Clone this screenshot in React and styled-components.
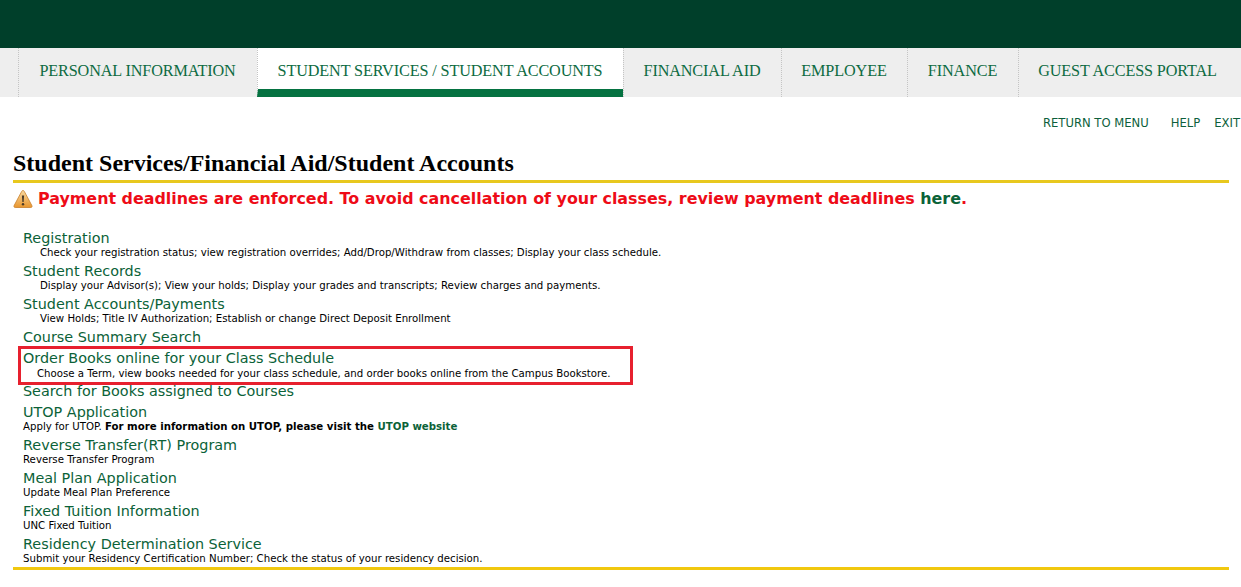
import styled, { createGlobalStyle } from "styled-components";

const tabs = [
  { label: "PERSONAL INFORMATION", width: 239 },
  { label: "STUDENT SERVICES / STUDENT ACCOUNTS", width: 366, active: true },
  { label: "FINANCIAL AID", width: 158 },
  { label: "EMPLOYEE", width: 126 },
  { label: "FINANCE", width: 111 },
  { label: "GUEST ACCESS PORTAL", width: 219 },
];

const menu = [
  {
    title: "Registration",
    text: "Check your registration status; view registration overrides; Add/Drop/Withdraw from classes; Display your class schedule.",
    indent: 17,
  },
  {
    title: "Student Records",
    text: "Display your Advisor(s); View your holds; Display your grades and transcripts; Review charges and payments.",
    indent: 17,
  },
  {
    title: "Student Accounts/Payments",
    text: "View Holds; Title IV Authorization; Establish or change Direct Deposit Enrollment",
    indent: 17,
  },
  { title: "Course Summary Search" },
  {
    title: "Order Books online for your Class Schedule",
    text: "Choose a Term, view books needed for your class schedule, and order books online from the Campus Bookstore.",
    indent: 14,
    marked: true,
  },
  { title: "Search for Books assigned to Courses" },
  { title: "UTOP Application", utop: true },
  { title: "Reverse Transfer(RT) Program", text: "Reverse Transfer Program" },
  { title: "Meal Plan Application", text: "Update Meal Plan Preference" },
  { title: "Fixed Tuition Information", text: "UNC Fixed Tuition" },
  {
    title: "Residency Determination Service",
    text: "Submit your Residency Certification Number; Check the status of your residency decision.",
  },
];

function WarningIcon() {
  return (
    <svg width="20" height="20" viewBox="0 0 20 20" aria-hidden="true">
      <defs>
        <linearGradient id="warn" x1="0" y1="0" x2="0" y2="1">
          <stop offset="0" stopColor="#f8d9a0" />
          <stop offset="1" stopColor="#e8962e" />
        </linearGradient>
      </defs>
      <path
        d="M10 1.5c.6 0 1 .3 1.3.9l7.6 14.2c.5 1 0 1.9-1.1 1.9H2.2c-1.1 0-1.6-.9-1.1-1.9L8.7 2.4c.3-.6.7-.9 1.3-.9z"
        fill="url(#warn)"
        stroke="#c9802c"
        strokeWidth="0.8"
      />
      <path d="M8.9 6.5h2.2l-.5 6.6H9.400z" fill="#4a3a28" />
      <circle cx="10" cy="15.200" r="1.200" fill="#4a3a28" />
    </svg>
  );
}

export default function App() {
  return (
    <>
      <GlobalStyle />
      <TopBar />
      <TabBar>
        {tabs.map((tab) => (
          <Tab key={tab.label} $active={tab.active} $width={tab.width}>
            {tab.label}
          </Tab>
        ))}
      </TabBar>
      <UtilityLinks>
        <UtilityLink>RETURN TO MENU</UtilityLink>
        <UtilityLink>HELP</UtilityLink>
        <UtilityLink>EXIT</UtilityLink>
      </UtilityLinks>
      <Content>
        <Heading>Student Services/Financial Aid/Student Accounts</Heading>
        <Notice>
          <WarningIcon />
          <span>
            Payment deadlines are enforced. To avoid cancellation of your classes, review payment
            deadlines <NoticeLink>here</NoticeLink>.
          </span>
        </Notice>
        <MenuList>
          {menu.map((item) => (
            <MenuItem key={item.title} $marked={item.marked}>
              <MenuTitle>{item.title}</MenuTitle>
              {item.text && (
                <MenuText $indent={item.indent} $marked={item.marked}>
                  {item.text}
                </MenuText>
              )}
              {item.utop && (
                <MenuText>
                  Apply for UTOP. <b>For more information on UTOP, please visit the </b>
                  <UtopLink>UTOP website</UtopLink>
                </MenuText>
              )}
            </MenuItem>
          ))}
        </MenuList>
      </Content>
    </>
  );
}

const GlobalStyle = createGlobalStyle`
  html, body {
    margin: 0;
    padding: 0;
    background: #fff;
    overflow: hidden;
  }
  body {
    font-family: "DejaVu Sans", Verdana, sans-serif;
  }
`;

const TopBar = styled.div`
  height: 48px;
  background: #003f2a;
`;

const TabBar = styled.nav`
  display: flex;
  height: 49px;
  padding-left: 18px;
  background: #eeeeee;
`;

const Tab = styled.a`
  box-sizing: border-box;
  flex: none;
  width: ${({ $width }) => $width}px;
  height: 49px;
  padding: 14px 1px 0 0;
  text-align: center;
  font: 16.200px/19px "Liberation Serif", "Times New Roman", serif;
  letter-spacing: -0.12px;
  color: #0d6b42;
  white-space: nowrap;
  border-left: 1px dotted #c4c4c4;
  background: ${({ $active }) => ($active ? "#fff" : "transparent")};
  border-bottom: ${({ $active }) => ($active ? "8px solid #057241" : "0")};
`;

const UtilityLinks = styled.div`
  display: flex;
  justify-content: flex-end;
  gap: 22px;
  height: 50px;
  padding-top: 18px;
  box-sizing: border-box;
  margin-right: 1px;
`;

const UtilityLink = styled.a`
  font-size: 11.600px;
  line-height: 16px;
  color: #0d5f3c;
  white-space: nowrap;
  &:last-child {
    margin-left: -8px;
  }
`;

const Content = styled.main`
  box-sizing: border-box;
  width: 1216px;
  margin-left: 13px;
  border-bottom: 3px solid #f1c80f;
  height: 423px;
`;

const Heading = styled.h2`
  margin: 0;
  height: 36px;
  box-sizing: border-box;
  padding-top: 3px;
  border-bottom: 3px solid #e8c81e;
  font: bold 24px/27px "Liberation Serif", "Times New Roman", serif;
  color: #000;
`;

const Notice = styled.div`
  display: flex;
  align-items: center;
  gap: 5px;
  height: 25px;
  margin-top: 3px;
  font-size: 15.900px;
  line-height: 20px;
  font-weight: bold;
  color: #ee0b17;
  white-space: nowrap;
`;

const NoticeLink = styled.a`
  color: #0b6238;
`;

const MenuList = styled.ul`
  list-style: none;
  margin: 0;
  padding: 19px 0 0 10px;
`;

const MenuItem = styled.li`
  position: relative;
  min-height: 21px;
  padding-bottom: ${({ $marked }) => ($marked ? "3px" : "4px")};

  &:not(:has(p)) {
    padding-bottom: 0;
  }

  ${({ $marked }) =>
    $marked &&
    `
    &::after {
      content: "";
      position: absolute;
      left: -5px;
      top: -4px;
      width: 615px;
      height: 39px;
      box-sizing: border-box;
      border: 3px solid #e7202e;
      pointer-events: none;
    }
  `}
`;

const MenuTitle = styled.a`
  display: block;
  font-size: 14.360px;
  line-height: 16px;
  color: #0b6238;
  white-space: nowrap;
`;

const MenuText = styled.p`
  margin: ${({ $marked }) => ($marked ? "2px" : "1px")} 0 0 ${({ $indent }) => $indent || 0}px;
  font-size: 10.200px;
  line-height: 12px;
  color: #000;
  white-space: nowrap;
`;

const UtopLink = styled.a`
  color: #0b6238;
  font-weight: bold;
`;
